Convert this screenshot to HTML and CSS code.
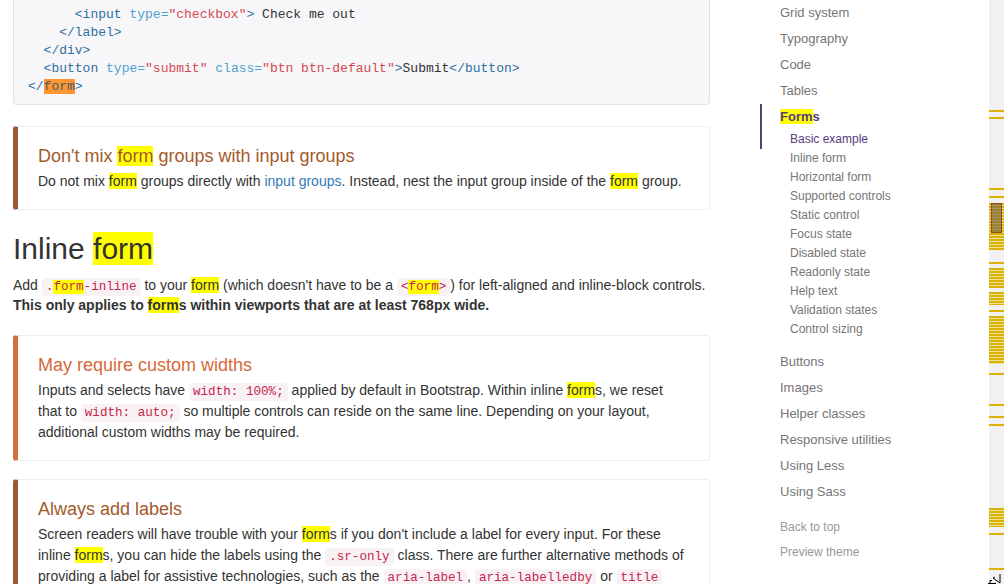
FILE: index.html
```html
<!DOCTYPE html>
<html lang="en">
<head>
<meta charset="utf-8">
<title>Inline form</title>
<link rel="stylesheet" href="styles.css">
</head>
<body>
<div class="page">
  <main class="main">
    <div class="highlight"><pre><code>      <span class="nt">&lt;input</span> <span class="na">type=</span><span class="s">"checkbox"</span><span class="nt">&gt;</span> Check me out
    <span class="nt">&lt;/label&gt;</span>
  <span class="nt">&lt;/div&gt;</span>
  <span class="nt">&lt;button</span> <span class="na">type=</span><span class="s">"submit"</span> <span class="na">class=</span><span class="s">"btn btn-default"</span><span class="nt">&gt;</span>Submit<span class="nt">&lt;/button&gt;</span>
<span class="nt">&lt;/</span><mark class="cur">form</mark><span class="nt">&gt;</span></code></pre></div>

    <div class="callout callout-warning">
      <h4>Don't mix <mark>form</mark> groups with input groups</h4>
      <p>Do not mix <mark>form</mark> groups directly with <a class="link" href="#">input groups</a>. Instead, nest the input group inside of the <mark>form</mark> group.</p>
    </div>

    <h2 class="sec-title">Inline <mark>form</mark></h2>
    <p class="wide">Add <code>.<mark>form</mark>-inline</code> to your <mark>form</mark> (which doesn't have to be a <code>&lt;<mark>form</mark>&gt;</code>) for left-aligned and inline-block controls. <strong>This only applies to <mark>form</mark>s within viewports that are at least 768px wide.</strong></p>

    <div class="callout callout-danger">
      <h4>May require custom widths</h4>
      <p>Inputs and selects have <code>width: 100%;</code> applied by default in Bootstrap. Within inline <mark>form</mark>s, we reset that to <code>width: auto;</code> so multiple controls can reside on the same line. Depending on your layout, additional custom widths may be required.</p>
    </div>

    <div class="callout callout-warning">
      <h4>Always add labels</h4>
      <p>Screen readers will have trouble with your <mark>form</mark>s if you don't include a label for every input. For these inline <mark>form</mark>s, you can hide the labels using the <code>.sr-only</code> class. There are further alternative methods of providing a label for assistive technologies, such as the <code>aria-label</code>, <code>aria-labelledby</code> or <code>title</code> attribute. If none of these are present, screen readers may resort to using the <code>placeholder</code> attribute, if present, but note that use of <code>placeholder</code> as a replacement for other labelling methods is not advised.</p>
    </div>
  </main>

  <aside class="sidebar">
    <ul class="nav">
      <li><a href="#">Grid system</a></li>
      <li><a href="#">Typography</a></li>
      <li><a href="#">Code</a></li>
      <li><a href="#">Tables</a></li>
      <li class="active"><a href="#"><mark>Form</mark>s</a>
        <ul class="subnav">
          <li class="active"><a href="#">Basic example</a></li>
          <li><a href="#">Inline form</a></li>
          <li><a href="#">Horizontal form</a></li>
          <li><a href="#">Supported controls</a></li>
          <li><a href="#">Static control</a></li>
          <li><a href="#">Focus state</a></li>
          <li><a href="#">Disabled state</a></li>
          <li><a href="#">Readonly state</a></li>
          <li><a href="#">Help text</a></li>
          <li><a href="#">Validation states</a></li>
          <li><a href="#">Control sizing</a></li>
        </ul>
      </li>
      <li><a href="#">Buttons</a></li>
      <li><a href="#">Images</a></li>
      <li><a href="#">Helper classes</a></li>
      <li><a href="#">Responsive utilities</a></li>
      <li><a href="#">Using Less</a></li>
      <li><a href="#">Using Sass</a></li>
    </ul>
    <a class="side-link back-to-top" href="#">Back to top</a>
    <a class="side-link" href="#">Preview theme</a>
  </aside>

  <div class="scrollbar">
    <div class="mk" style="top:110px"></div>
    <div class="mk" style="top:117px"></div>
    <div class="mk" style="top:188px"></div>
    <div class="mk" style="top:196px"></div>
    <div class="mk dense" style="top:203px;height:47px"></div>
    <div class="mk" style="top:262px"></div>
    <div class="mk dense" style="top:268px;height:20px"></div>
    <div class="mk dense" style="top:292px;height:13px"></div>
    <div class="mk" style="top:310px"></div>
    <div class="mk dense" style="top:316px;height:48px"></div>
    <div class="mk" style="top:373px"></div>
    <div class="mk" style="top:404px"></div>
    <div class="mk" style="top:416px"></div>
    <div class="mk" style="top:424px"></div>
    <div class="mk dense" style="top:508px;height:19px"></div>
    <div class="mk" style="top:533px"></div>
    <div class="mk" style="top:568px"></div>
    <div class="thumb"></div>
    <svg class="corner" width="17" height="11" viewBox="0 0 17 11"><path d="M1 10.5 H9 M3 10.5 V7.5 H5 M6 5 L13 10 M6 5 L8 4 M13 1 L13 10" stroke="#000" stroke-width="1" fill="none"/></svg>
  </div>
</div>
</body>
</html>
```

FILE: styles.css
```css
* { box-sizing: border-box; }

html, body {
  margin: 0;
  padding: 0;
}

body {
  width: 1004px;
  height: 584px;
  overflow: hidden;
  background: #fff;
  color: #333;
  font-family: "Liberation Sans", Arial, sans-serif;
  font-size: 14px;
  line-height: 1.428571;
}

.page {
  display: flex;
  height: 584px;
}

/* main column */
.main {
  flex: none;
  width: 710px;
  padding-left: 13px;
}

.highlight {
  background: #f7f7f9;
  border: 1px solid #e1e1e8;
  border-top: 0;
  border-radius: 0 0 4px 4px;
  padding: 6px 14px 8px;
}

.highlight pre {
  margin: 0;
  font-family: "Liberation Mono", "Courier New", monospace;
  font-size: 13px;
  line-height: 18px;
  color: #333;
  white-space: pre;
}

.highlight code {
  font-family: inherit;
  font-size: inherit;
  line-height: inherit;
  padding: 0;
  color: inherit;
  background: none;
  border-radius: 0;
}

.nt { color: #2f6f9f; }
.na { color: #4f9fcf; }
.s { color: #d44950; }

mark {
  background: #ffff00;
  color: inherit;
  padding: 0;
}

mark.cur {
  background: #ff9632;
  color: #4a5a6a;
}

.link {
  color: #337ab7;
  text-decoration: none;
}

code {
  font-family: "Liberation Mono", "Courier New", monospace;
  font-size: 90%;
  line-height: 1;
  padding: 2px 4px;
  color: #c7254e;
  background: #f9f2f4;
  border-radius: 4px;
}

p {
  margin: 0 0 10px;
}

.wide {
  margin-right: -8px;
}

.sec-title {
  margin: 22px 0 11px;
  font-size: 30px;
  font-weight: 500;
  line-height: 33px;
  color: #333;
}

.callout {
  margin: 21px 0;
  padding: 20px 20px 17px;
  border: 1px solid #eee;
  border-left-width: 5px;
  border-radius: 3px;
}

.callout-danger {
  margin-top: 19px;
}

.callout + .callout {
  margin-top: -3px;
}

.callout h4 {
  margin: 0 0 5px;
  font-size: 18px;
  font-weight: 500;
  line-height: 19px;
}

.callout p {
  margin: 0;
  line-height: 21px;
}

.callout-warning { border-left-color: #9a5836; }
.callout-warning h4 { color: #a4592b; }
.callout-danger { border-left-color: #d2703a; }
.callout-danger h4 { color: #d5693b; }

/* sidebar */
.sidebar {
  flex: none;
  width: 229px;
  margin-left: 50px;
}

.nav {
  list-style: none;
  margin: 0;
  padding: 0;
}

.nav > li > a {
  display: block;
  padding: 4px 20px;
  font-size: 13px;
  line-height: 18px;
  color: #767676;
  text-decoration: none;
}

.nav > li.active > a {
  padding-left: 18px;
  border-left: 2px solid #563d7c;
  color: #563d7c;
  font-weight: bold;
}

.subnav {
  list-style: none;
  margin: 0;
  padding: 0 0 10px;
}

.subnav a {
  display: block;
  padding: 1px 30px;
  font-size: 12px;
  line-height: 17px;
  color: #767676;
  text-decoration: none;
}

.subnav li.active a {
  padding-left: 28px;
  border-left: 2px solid #563d7c;
  color: #563d7c;
}

.side-link {
  display: block;
  margin-left: 10px;
  padding: 4px 10px;
  font-size: 12px;
  line-height: 17px;
  font-weight: 500;
  color: #999;
  text-decoration: none;
}

.back-to-top {
  margin-top: 10px;
}

/* fake scrollbar with find-in-page tick marks */
.scrollbar {
  flex: none;
  width: 15px;
  position: relative;
  background: #f1f1f1;
}

.mk {
  position: absolute;
  left: 0;
  right: 0;
  height: 2px;
  background: #d9b300;
}

.mk.dense {
  background: repeating-linear-gradient(to bottom, #d9b300 0, #d9b300 2px, #eee0a0 2px, #eee0a0 3px);
}

.thumb {
  position: absolute;
  left: 2px;
  right: 2px;
  top: 203px;
  height: 30px;
  background: rgba(130, 110, 70, 0.7);
  border: 1px solid rgba(140, 60, 30, 0.8);
}

.corner {
  position: absolute;
  right: 0;
  bottom: 0;
}
```
